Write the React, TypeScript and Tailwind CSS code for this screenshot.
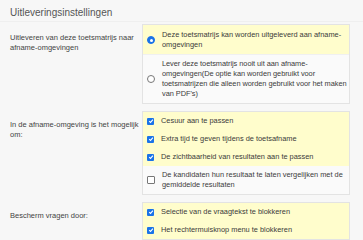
const font = { fontFamily: '"Liberation Sans", Arial, sans-serif' }

function Radio({ checked }: { checked?: boolean }) {
  return checked ? (
    <span className="w-[8px] h-[8px] rounded-full bg-[#1a73e8] border border-[#1a73e8] flex items-center justify-center shrink-0">
      <span className="w-[3px] h-[3px] rounded-full bg-white" />
    </span>
  ) : (
    <span className="w-[8px] h-[8px] rounded-full bg-white border border-[#777] shrink-0" />
  )
}

function Check({ checked }: { checked?: boolean }) {
  return checked ? (
    <span className="w-[7px] h-[7px] rounded-[1px] bg-[#1a73e8] flex items-center justify-center shrink-0">
      <svg viewBox="0 0 10 10" className="w-[6px] h-[6px]">
        <path d="M2 5.2 L4.2 7.4 L8.2 2.6" fill="none" stroke="white" strokeWidth="1.8" />
      </svg>
    </span>
  ) : (
    <span className="w-[8px] h-[8px] rounded-[1px] bg-white border border-[#777] shrink-0" />
  )
}

function Option({ on, kind, children }: { on?: boolean; kind: 'radio' | 'check'; children: React.ReactNode }) {
  return (
    <div className={`flex items-center gap-[7px] pl-[4px] pr-[1px] py-[4px] ${on ? 'bg-[#fffdcc]' : 'bg-[#fafafa]'}`}>
      {kind === 'radio' ? <Radio checked={on} /> : <Check checked={on} />}
      <span className="text-[7.4px] leading-[10px] text-[#3a3a3a]">{children}</span>
    </div>
  )
}

function Row({ label, children }: { label: React.ReactNode; children: React.ReactNode }) {
  return (
    <div className="flex">
      <div className="w-[142px] pl-[10px] pt-[9px] pr-[2px] text-[7.5px] leading-[10px] text-[#444]">{label}</div>
      <div className="w-[208px] border border-[#e3e3e3] bg-[#fafafa]">{children}</div>
    </div>
  )
}

export default function App() {
  return (
    <div className="w-[363px] h-[240px] bg-[#f7f7f7] overflow-hidden" style={font}>
      <div className="h-[22px] pl-[10px] pt-[7px] text-[10px] leading-[12px] text-[#555] border-b border-[#efefef]">
        Uitleveringsinstellingen
      </div>
      <div className="flex flex-col gap-[7px] pt-[2px]">
        <Row label={<>Uitleveren van deze toetsmatrijs naar afname-omgevingen</>}>
          <div className="pt-[5px] pb-[4px] flex items-center gap-[7px] pl-[4px] pr-[1px] bg-[#fffdcc]">
            <Radio checked />
            <span className="text-[7.4px] leading-[10px] text-[#3a3a3a]">Deze toetsmatrijs kan worden uitgeleverd aan afname-omgevingen</span>
          </div>
          <div className="py-[4px] flex items-center gap-[7px] pl-[4px] pr-[1px] bg-[#fafafa] border-t border-[#f0f0f0]">
            <Radio />
            <span className="text-[7.4px] leading-[10px] text-[#3a3a3a] tracking-[-0.05px]">
              Lever deze toetsmatrijs nooit uit aan afname-omgevingen(De optie kan worden gebruikt voor toetsmatrijzen die alleen worden gebruikt voor het maken van PDF's)
            </span>
          </div>
        </Row>
        <Row label={<>In de afname-omgeving is het mogelijk om:</>}>
          <Option on kind="check">Cesuur aan te passen</Option>
          <Option on kind="check">Extra tijd te geven tijdens de toetsafname</Option>
          <Option on kind="check">De zichtbaarheid van resultaten aan te passen</Option>
          <Option kind="check">De kandidaten hun resultaat te laten vergelijken met de gemiddelde resultaten</Option>
        </Row>
        <Row label="Bescherm vragen door:">
          <Option on kind="check">Selectie van de vraagtekst te blokkeren</Option>
          <Option on kind="check">Het rechtermuisknop menu te blokkeren</Option>
        </Row>
      </div>
    </div>
  )
}
